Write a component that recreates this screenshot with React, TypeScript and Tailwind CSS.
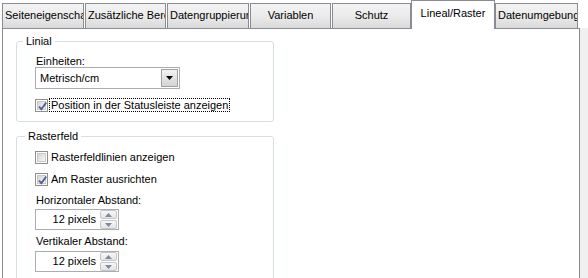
import React from "react";

const tabs = [
  { label: "Seiteneigenschaften", w: "w-[82px]" },
  { label: "Zusätzliche Bereiche", w: "w-[81px]" },
  { label: "Datengruppierung", w: "w-[82px]" },
  { label: "Variablen", w: "w-[81px]" },
  { label: "Schutz", w: "w-[79px]" },
];

function Check({ checked }: { checked?: boolean }) {
  return (
    <span className="relative w-[13px] h-[13px] border border-[#8e8f8f] bg-white p-[1px] flex shrink-0">
      <span className="flex-1 border border-[#c8c8c8] bg-gradient-to-br from-[#d4d4d4] to-[#f8f8f8]" />
      {checked && (
        <svg className="absolute inset-0" width="13" height="13" viewBox="0 0 13 13">
          <path d="M3 6.5 L5.3 9.2 L10.2 2.6" fill="none" stroke="#4d5f96" strokeWidth="1.8" />
        </svg>
      )}
    </span>
  );
}

function Spin() {
  return (
    <div className="w-[84px] h-[21px] border border-[#abadb3] bg-white flex items-center">
      <span className="flex-1 text-right pr-[4px] leading-[13px]">12 pixels</span>
      <div className="w-[17px] h-[19px] mr-[1px] flex flex-col gap-[1px]">
        <div className="flex-1 border border-[#c6c6c6] rounded-[2px] bg-gradient-to-b from-[#f7f7f7] to-[#e4e4e4] flex items-center justify-center">
          <svg width="7" height="4" viewBox="0 0 7 4">
            <path d="M0 4 L3.5 0 L7 4 Z" fill="#7d8aa3" />
          </svg>
        </div>
        <div className="flex-1 border border-[#c6c6c6] rounded-[2px] bg-gradient-to-b from-[#f7f7f7] to-[#e4e4e4] flex items-center justify-center">
          <svg width="7" height="4" viewBox="0 0 7 4">
            <path d="M0 0 L3.5 4 L7 0 Z" fill="#7d8aa3" />
          </svg>
        </div>
      </div>
    </div>
  );
}

export default function App() {
  return (
    <div
      className="w-[588px] h-[278px] overflow-hidden bg-white text-[11px] text-black flex flex-col"
      style={{ fontFamily: '"Liberation Sans", Arial, sans-serif' }}
    >
      <div className="flex items-end h-[29px] pl-[2px] relative z-10">
        {tabs.map((t) => (
          <div
            key={t.label}
            className={`${t.w} mr-[1px] h-[25px] mb-[1px] border border-b-0 border-[#898c95] bg-gradient-to-b from-[#f3f3f3] via-[#ebebeb] to-[#d9d9d9] text-center whitespace-nowrap overflow-hidden px-[2px] leading-[23px]`}
          >
            {t.label}
          </div>
        ))}
        <div className="w-[84px] -ml-[1px] h-[29px] border border-b-0 border-[#898c95] bg-white text-center whitespace-nowrap overflow-hidden px-[2px] leading-[24px]">
          Lineal/Raster
        </div>
        <div className="w-[83px] h-[25px] mb-[1px] border border-b-0 border-[#898c95] bg-gradient-to-b from-[#f3f3f3] via-[#ebebeb] to-[#d9d9d9] text-center whitespace-nowrap overflow-hidden px-[2px] leading-[23px]">
          Datenumgebung
        </div>
      </div>

      <div className="flex flex-1 -mt-[1px]">
        <div className="ml-[2px] w-[578px] border border-b-0 border-[#898c95] bg-white pl-[13px]">
          <fieldset className="mt-[6px] w-[258px] border border-[#d5dfe5] rounded-[3px] pl-[18px] pb-[9px]">
            <legend className="-ml-[12px] px-[3px] leading-[13px]">Linial</legend>
            <div className="mt-[7px] ml-[1px] leading-[12px]">Einheiten:</div>
            <div className="w-[145px] h-[22px] border border-[#abadb3] bg-white flex items-center">
              <span className="flex-1 pl-[4px] leading-[13px]">Metrisch/cm</span>
              <div className="w-[17px] h-[18px] mr-[1px] border border-[#a0a0a0] bg-gradient-to-b from-[#f2f2f2] to-[#d4d4d4] flex items-center justify-center">
                <svg width="7" height="4" viewBox="0 0 7 4">
                  <path d="M0 0 L7 0 L3.5 4 Z" fill="#000" />
                </svg>
              </div>
            </div>
            <div className="mt-[9px] flex items-center">
              <Check checked />
              <span className="ml-[1px] border border-dotted border-black px-[1px] leading-[12px]">
                Position in der Statusleiste anzeigen
              </span>
            </div>
          </fieldset>

          <fieldset className="mt-[8px] w-[258px] border border-[#d5dfe5] rounded-[3px] pl-[18px] pb-[20px]">
            <legend className="-ml-[10px] px-[3px] leading-[13px]">Rasterfeld</legend>
            <div className="mt-[8px] flex items-center gap-[3px]">
              <Check />
              <span className="leading-[13px]">Rasterfeldlinien anzeigen</span>
            </div>
            <div className="mt-[9px] flex items-center gap-[3px]">
              <Check checked />
              <span className="leading-[13px]">Am Raster ausrichten</span>
            </div>
            <div className="mt-[8px] ml-[1px] leading-[12px]">Horizontaler Abstand:</div>
            <div className="mt-[3px]">
              <Spin />
            </div>
            <div className="mt-[5px] ml-[1px] leading-[12px]">Vertikaler Abstand:</div>
            <div className="mt-[4px]">
              <Spin />
            </div>
          </fieldset>
        </div>
        <div className="flex-1 bg-[#f0f0f0]" />
      </div>
    </div>
  );
}
